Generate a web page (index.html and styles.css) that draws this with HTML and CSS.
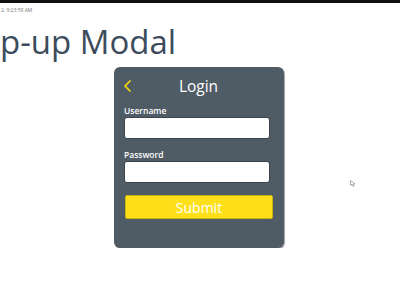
FILE: index.html
```html
<!DOCTYPE html>
<html lang="en">
<head>
  <meta charset="UTF-8">
  <title>Pop-up Modal</title>
  <link rel="stylesheet" href="styles.css">
</head>
<body>
  <div class="topbar"></div>
  <div class="stamp">2, 9:23:59 AM</div>
  <h1 class="title">p-up Modal</h1>

  <div class="modal">
    <div class="modal-head">
      <svg class="back" width="9" height="12" viewBox="0 0 9 12">
        <path d="M7 1 L2 6 L7 11" fill="none" stroke="#f5d90f" stroke-width="1.7" stroke-linecap="round" stroke-linejoin="round"/>
      </svg>
      <h2>Login</h2>
    </div>
    <label>Username</label>
    <input type="text" class="field">
    <label>Password</label>
    <input type="password" class="field">
    <button class="submit">Submit</button>
  </div>

  <!-- mouse pointer left in the screenshot -->
  <svg class="cursor" width="6" height="7" viewBox="0 0 6 7">
    <path d="M0.5 0.5 L0.5 5.5 L2 4.3 L3.2 6.5 L4 6 L3 4 L5 4 Z" fill="#fff" stroke="#999" stroke-width="0.8"/>
  </svg>
</body>
</html>
```

FILE: styles.css
```css
body {
  margin: 0;
  font-family: "Open Sans", "Noto Sans", sans-serif;
  background-color: #fff;
  overflow: hidden;
}

.topbar {
  height: 3px;
  background-color: #111;
}

.stamp {
  font-size: 5px;
  line-height: 8px;
  color: #777;
  margin: 3px 0 0 1px;
}

.title {
  margin: 4px 0 1px 0;
  font-size: 33px;
  font-weight: normal;
  line-height: 48px;
  color: #3c4c5c;
}

.modal {
  margin-left: 114px;
  width: 170px;
  height: 181px;
  box-sizing: border-box;
  padding: 0 10px;
  background-color: #4f5b65;
  border-radius: 6px;
  box-shadow: 1px 1px 1px rgba(0, 0, 0, 0.35);
  display: flex;
  flex-direction: column;
}

.modal-head {
  display: flex;
  align-items: center;
  height: 37px;
}

.back {
  margin-left: -1px;
}

.modal-head h2 {
  flex: 1;
  margin: 0 0 0 -9px;
  text-align: center;
  color: #fff;
  font-size: 15.5px;
  font-weight: normal;
}

label {
  color: #fff;
  font-size: 8.5px;
  font-weight: 600;
  line-height: 13px;
}

.field {
  width: 146px;
  height: 22px;
  box-sizing: border-box;
  border: 1px solid #3c454d;
  border-radius: 3px;
  background-color: #fff;
  margin: 0 0 9px 0;
  padding: 0 4px;
}

.submit {
  margin: 3px 0 0 1px;
  width: 148px;
  height: 24px;
  background-color: #fddf1a;
  color: #fff;
  border: 1px solid #c9b20e;
  border-radius: 2px;
  font-family: inherit;
  font-size: 14px;
  padding: 0;
}

.cursor {
  position: absolute;
  left: 350px;
  top: 180px;
}
```
